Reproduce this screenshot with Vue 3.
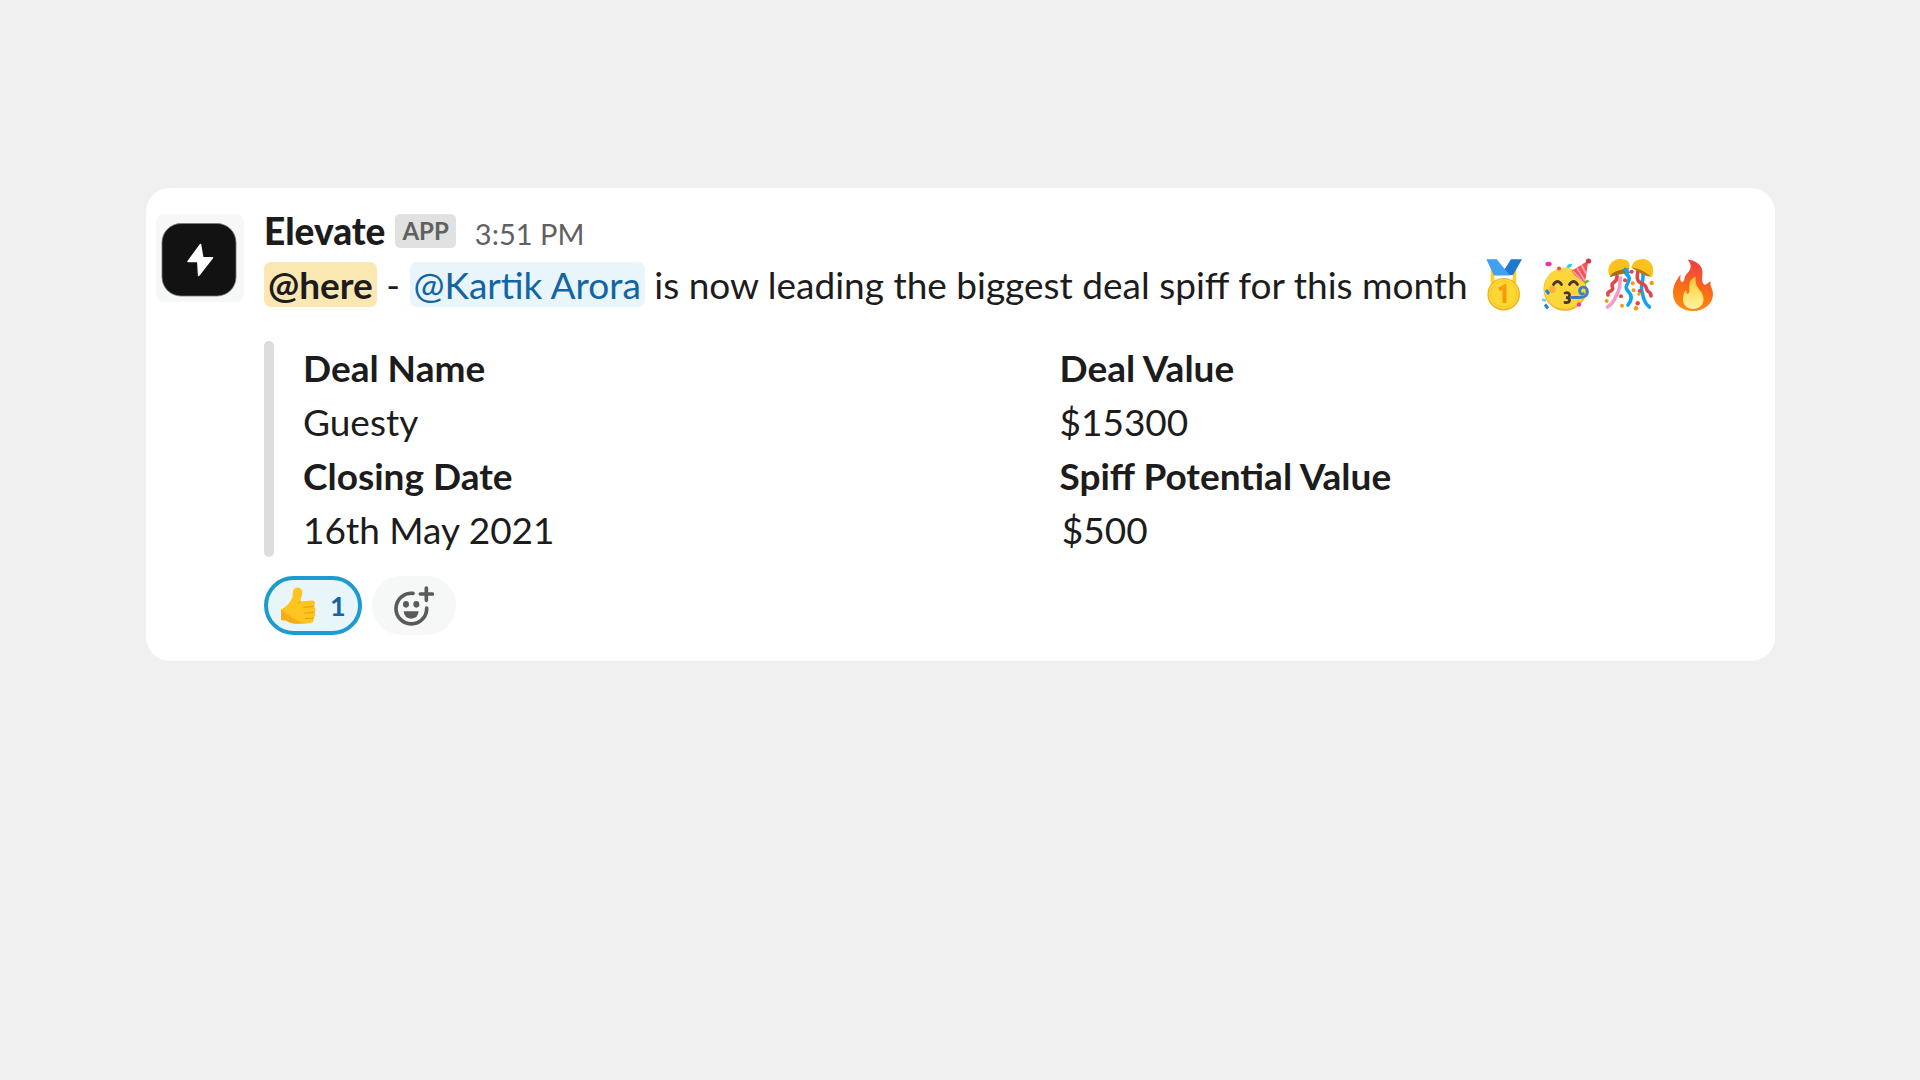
<script setup>
import { computed, ref } from 'vue'

const fields = [
  { label: 'Deal Name', value: 'Guesty' },
  { label: 'Deal Value', value: '$15300' },
  { label: 'Closing Date', value: '16th May 2021' },
  { label: 'Spiff Potential Value', value: '\u200A$500' },
]

const others = 0
const reacted = ref(true)
const count = computed(() => others + (reacted.value ? 1 : 0))

function toggleReaction() {
  reacted.value = !reacted.value
}
</script>

<template>
  <main class="page">
    <article class="message">
      <svg class="avatar" viewBox="0 0 88 88" role="img" aria-label="Elevate">
        <rect width="88" height="88" rx="8" fill="#f6f8f7" />
        <rect x="6" y="9.500" width="74" height="72.500" rx="19" fill="#121212" stroke="#777" stroke-width="0.8" />
        <path d="M44.5 30.5 32 47.5h9.8l.8 14L56.5 43.800h-9.700z" fill="#fff" stroke="#fff" stroke-width="1.500" stroke-linejoin="round" />
      </svg>

      <div class="content">
        <header class="header">
          <strong class="name">Elevate</strong>
          <span class="badge">APP</span>
          <time class="time">3:51 PM</time>
        </header>

        <p class="text">
          <span class="here">@here</span> - <a href="#" class="mention">@Kartik Arora</a> is now leading the biggest deal spiff for this month
          <span class="emojis">
            <svg class="emoji" viewBox="0 0 54 54">
              <path d="M15.500 12h22v12h-22z" fill="none" stroke="#fdd022" stroke-width="3.500" />
              <path d="M34 1.300h11L36 17H24z" fill="#1e78d0" />
              <path d="M9.300 1.300h10.400L33 17.500H17z" fill="#42a0f2" />
              <circle cx="26.700" cy="36.300" r="16.300" fill="#eeb31c" />
              <circle cx="26.700" cy="36" r="15" fill="#fdd835" />
              <circle cx="26.700" cy="36" r="13" fill="none" stroke="#f6c62a" stroke-width="1" />
              <path d="m22 31.500 5.500-3V45" fill="none" stroke="#f59c0b" stroke-width="4" />
            </svg>
            <svg class="emoji" viewBox="0 0 54 54">
              <circle cx="25" cy="31.300" r="21.500" fill="#efb12c" />
              <circle cx="24.800" cy="30.500" r="20.700" fill="#fdd63c" />
              <circle cx="12.300" cy="31.500" r="3.500" fill="#f7a13f" opacity="0.7" />
              <path d="M48.300 2.500 31.500 13q5 7.500 13.500 11.500z" fill="#f2525b" />
              <path d="m37 10 8 13M41.500 7l4.500 9M33 13l9 10" stroke="#ffa3a6" stroke-width="1.800" />
              <circle cx="48.500" cy="3" r="2.600" fill="#d8343b" />
              <g fill="none" stroke="#4e342e" stroke-width="2.800" stroke-linecap="round">
                <path d="M13.500 26.500q4-6 8 0M29.500 26.500q4-6 8 0" />
                <path d="M25 35q4.500-1 4.500 2t-3.500 2.500q4 .5 3.500 3T25 44.500" />
              </g>
              <path d="M30 39.500h10q8-.5 7.500-6t-6-4q-3 2-1.500 5t4.500.5" fill="none" stroke="#3b82c4" stroke-width="2.800" />
              <path d="M33 39h5" stroke="#7457a5" stroke-width="2" />
              <ellipse cx="8.500" cy="6" rx="3.200" ry="2.200" fill="#f52fa4" />
              <path d="m26 9 3-3h3l-1 3-3 1z" fill="#16d3f2" />
              <circle cx="19" cy="10.500" r="2" fill="#ef4b4b" />
              <path d="m44.500 25 4-2.500" stroke="#53c41a" stroke-width="2.500" />
              <ellipse cx="39" cy="46.500" rx="2" ry="2.300" fill="#f52fa4" />
              <path d="m6 32 3 4M5 46.500l3 4" stroke="#1a88d9" stroke-width="3" />
              <path d="m2 41.500 4 1" stroke="#74c8ef" stroke-width="2.500" />
            </svg>
            <svg class="emoji" viewBox="0 0 54 54">
              <g fill="none" stroke-width="3.600" stroke-linecap="round">
                <path d="M14 18c1 6-5 6-5 9s2 3 0 5-5 1-4 5" stroke="#e54348" />
                <path d="M17.500 20c-1 5 0 10-3 15s-2 9-10 14" stroke="#f59bc4" />
                <path d="M20.500 12c2 5 7 5 5.500 10s-5 7-1 11 4 9 0 14" stroke="#12a4ef" />
                <path d="M40 15c1 8-3 13-1 19s1 10 7.500 15" stroke="#12a4ef" />
                <path d="M35 13c-1 5-2 10 3 12s5 4 6 7 4 1 4 6" stroke="#e54348" />
              </g>
              <path d="M7 19C2 9 9 1 17 1s11 4 9 10z" fill="#fcc21b" />
              <path d="M7 19Q8 15 14 13T26 10q-1.500 5-7 6T7 19z" fill="#a66c1d" />
              <path d="M28.500 10C29 3 36 .5 41 1s12 7 8 18z" fill="#fcc21b" />
              <path d="M28.500 9.500Q34 10 39 12.500t9.500 6.300q-6-.5-10-3t-10-6.300z" fill="#b6761c" />
              <path d="M21 10.500q3 1.500 5 5" fill="none" stroke="#12a4ef" stroke-width="3.500" />
              <g fill="#e54348">
                <circle cx="28.700" cy="13.700" r="2" />
                <circle cx="22" cy="22.300" r="2" />
                <circle cx="36.700" cy="33" r="2" />
                <circle cx="18" cy="38.300" r="2" />
                <circle cx="34.700" cy="45.300" r="2.200" />
              </g>
              <g fill="#f29b18">
                <circle cx="48.700" cy="25" r="2.200" />
                <circle cx="29.700" cy="25.300" r="2" />
                <circle cx="30.500" cy="32.300" r="2" />
                <circle cx="3.700" cy="43" r="2" />
                <circle cx="19" cy="47.700" r="2" />
                <circle cx="33" cy="50.300" r="2.200" />
                <circle cx="36" cy="36" r="1.800" />
              </g>
            </svg>
            <svg class="emoji" viewBox="0 0 54 54">
              <defs>
                <linearGradient id="flame" x1="0.6" y1="0" x2="0.4" y2="1">
                  <stop offset="0" stop-color="#ee3f43" />
                  <stop offset="0.3" stop-color="#f4542f" />
                  <stop offset="0.65" stop-color="#fb7312" />
                  <stop offset="1" stop-color="#ff8a13" />
                </linearGradient>
                <linearGradient id="core" x1="0" y1="0" x2="0" y2="1">
                  <stop offset="0" stop-color="#fdbb2c" />
                  <stop offset="0.45" stop-color="#fee063" />
                  <stop offset="1" stop-color="#fff2a0" />
                </linearGradient>
              </defs>
              <path d="M21.500 1.500C29 2 37 7 36.500 15c-.3 5-1 9 1.500 11.500 3 1 3.500-2.500 7-3C43 28 47 30 47 36c0 10-9 17-20 17S7 46 7 35.500C7 27 10 23 14.500 16.500c0 4-1 6 1.500 7.500 3 0 1.500-5 5-8.500C25 11.500 26.500 7 21.500 1.500z" fill="url(#flame)" />
              <path d="M29.500 18.500c0 6 .5 9 3 12s5 6 5 11c0 6-5 9.500-10.500 9.500S16.500 47 17 41c.3-4 1-7 3-9 .5 2 .5 4 2 4 3-2 0-8 2-12 1-2.500 3-4.500 5.500-5.500z" fill="url(#core)" />
            </svg>
          </span>
        </p>

        <section class="attachment">
          <dl class="fields">
            <div v-for="field in fields" :key="field.label">
              <dt>{{ field.label }}</dt>
              <dd>{{ field.value }}</dd>
            </div>
          </dl>
        </section>

        <footer class="reactions">
          <button
            type="button"
            class="reaction"
            :class="{ active: reacted }"
            aria-label="Thumbs up"
            :aria-pressed="reacted"
            @click="toggleReaction"
          >
            <svg class="thumb" viewBox="0 0 38 38">
              <path d="M1 22.500C6 20 11 15 12.500 10c.8-4-.5-6.500 2-8.500C18-.5 22 1 22.300 5c.2 4-2.300 6.500-1.800 9.500L32 13.600c3.500 0 4 4 1.500 5.400 2.500 1.500 2.500 5 .5 6 2 1.500 1.500 4.500-.5 5.500 1 3-.5 5.500-3.500 5.500l-12 .7c-6 0-9-1.200-12-3.200L1 33z" fill="#ffc41e" />
              <path d="M1 22.500v10.500l5 .5q4 3 12 3.200l10-.5c-9-.5-14-4.200-18-7.200-3-2.500-6-2.500-9-6.500z" fill="#f5ad17" />
              <path d="M34 19c-3 1.300-7 1-10 1M34.500 25c-3 1-7 1-10 1M33.500 30.800c-3 .8-5 .7-8 .7M20.500 14.500l-2 1.500" fill="none" stroke="#e09a12" stroke-width="1" stroke-linecap="round" />
            </svg>
            <span>{{ count }}</span>
          </button>
          <button type="button" class="reaction add" aria-label="Add reaction">
            <svg class="smile" viewBox="0 0 120 120">
              <g fill="none" stroke="#5a5a5a" stroke-width="11" stroke-linecap="round">
                <path d="M57 22A46 46 0 1 0 98 66" />
                <path d="M97 6v37M79 24h36" />
              </g>
              <ellipse cx="36" cy="55" rx="9" ry="10" fill="#5a5a5a" />
              <ellipse cx="67" cy="55" rx="9" ry="10" fill="#5a5a5a" />
              <path d="M29 76h45q-2 22-22.500 22T29 76z" fill="#5a5a5a" />
            </svg>
          </button>
        </footer>
      </div>
    </article>
  </main>
</template>

<style>
body {
  background: #f0f0f0;
}
</style>

<style scoped>
.page {
  padding: 188px 145px 188px 146px;
  color: #1d1c1d;
  font-family: Lato, "Noto Sans", sans-serif;
  font-size: 37px;
  line-height: 54px;
}

.message {
  display: flex;
  gap: 20px;
  padding: 16px 48px 26px 10px;
  border-radius: 24px;
  background: #fff;
}

.avatar {
  flex: none;
  width: 88px;
  height: 88px;
  margin-top: 10px;
}

.content {
  flex: 1;
  min-width: 0;
}

.header {
  display: flex;
  align-items: baseline;
}

.name {
  font-weight: 900;
}

.badge {
  align-self: center;
  margin: 0 19px 0 10px;
  padding: 0 7px;
  border-radius: 5px;
  background: #e0e2e1;
  color: #616061;
  font-size: 24px;
  font-weight: 700;
  line-height: 34px;
}

.time {
  color: #616061;
  font-size: 29px;
  line-height: 40px;
}

.text {
  margin: 0;
}

.here,
.mention {
  padding: 0 4px;
  border-radius: 7px;
}

.here {
  background: #fbe7b2;
  font-weight: 700;
}

.mention {
  background: #e8f5fb;
  color: #1264a3;
  text-decoration: none;
}

.emojis {
  display: inline-flex;
  gap: 9px;
  vertical-align: top;
}

.emoji {
  width: 54px;
  height: 54px;
}

.attachment {
  display: flex;
  gap: 29px;
  margin: 29px 0 19px;
}

.attachment::before {
  content: "";
  flex: none;
  width: 10px;
  border-radius: 5px;
  background: #ddd;
}

.fields {
  flex: 1;
  display: grid;
  grid-template-columns: 17fr 15fr;
  margin: 0;
}

.fields dt {
  font-weight: 700;
}

.fields dd {
  margin: 0;
}

.reactions {
  display: flex;
  gap: 10px;
}

.reaction {
  display: flex;
  align-items: center;
  gap: 12px;
  box-sizing: border-box;
  height: 59px;
  padding: 0 12px;
  border: 4px solid #f6f7f7;
  border-radius: 30px;
  background: #f6f7f7;
  color: #616061;
  font: 700 27px Lato, "Noto Sans", sans-serif;
  cursor: pointer;
}

.reaction.active {
  border-color: #1d9bd1;
  background: #e8f5fb;
  color: #1264a3;
}

.reaction.add {
  padding: 0 18px;
}

.thumb {
  width: 38px;
  height: 38px;
}

.smile {
  width: 40px;
  height: 40px;
}
</style>
